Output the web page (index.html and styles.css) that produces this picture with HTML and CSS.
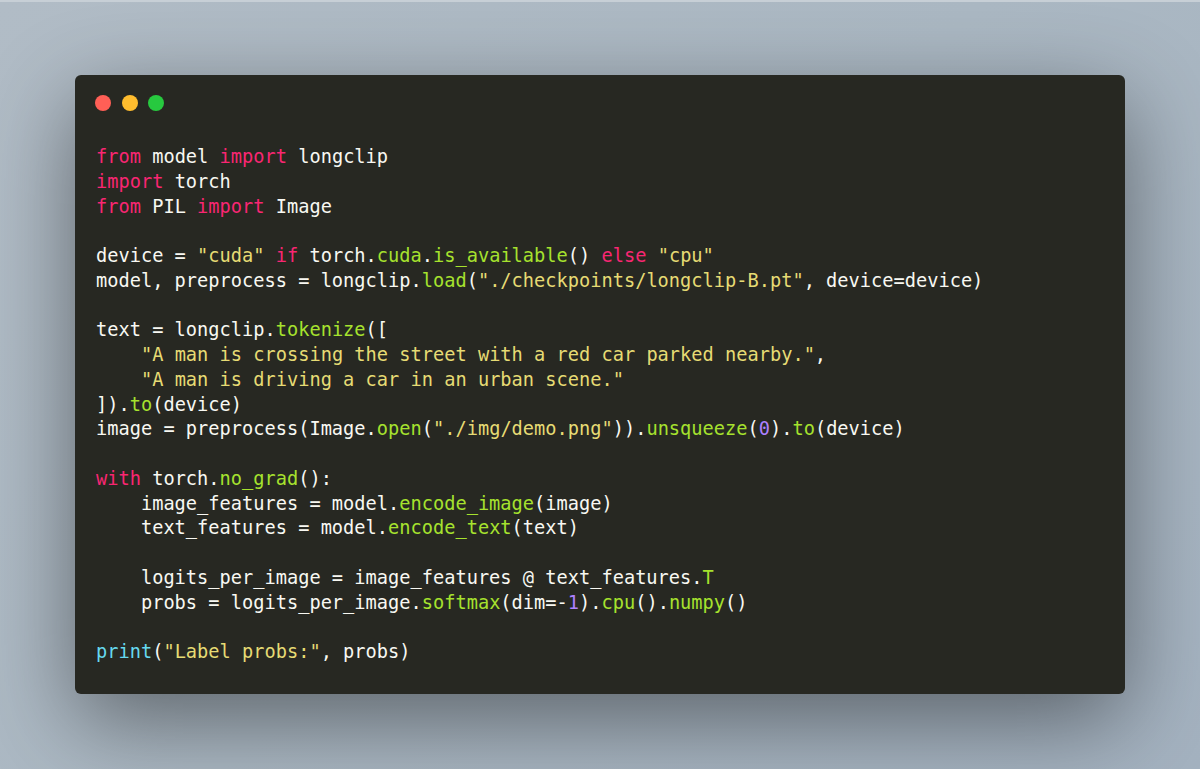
FILE: index.html
```html
<!DOCTYPE html>
<html>
<head>
<meta charset="utf-8">
<link rel="stylesheet" href="styles.css">
</head>
<body>
<div class="frame">
  <div class="window">
    <div class="controls">
      <span class="dot red"></span>
      <span class="dot yellow"></span>
      <span class="dot green"></span>
    </div>
<pre class="code"><span class="kw">from</span> model <span class="kw">import</span> longclip
<span class="kw">import</span> torch
<span class="kw">from</span> PIL <span class="kw">import</span> Image

device = <span class="str">"cuda"</span> <span class="kw">if</span> torch.<span class="fn">cuda</span>.<span class="fn">is_available</span>() <span class="kw">else</span> <span class="str">"cpu"</span>
model, preprocess = longclip.<span class="fn">load</span>(<span class="str">"./checkpoints/longclip-B.pt"</span>, device=device)

text = longclip.<span class="fn">tokenize</span>([
    <span class="str">"A man is crossing the street with a red car parked nearby."</span>,
    <span class="str">"A man is driving a car in an urban scene."</span>
]).<span class="fn">to</span>(device)
image = preprocess(Image.<span class="fn">open</span>(<span class="str">"./img/demo.png"</span>)).<span class="fn">unsqueeze</span>(<span class="num">0</span>).<span class="fn">to</span>(device)

<span class="kw">with</span> torch.<span class="fn">no_grad</span>():
    image_features = model.<span class="fn">encode_image</span>(image)
    text_features = model.<span class="fn">encode_text</span>(text)

    logits_per_image = image_features @ text_features.<span class="fn">T</span>
    probs = logits_per_image.<span class="fn">softmax</span>(dim=-<span class="num">1</span>).<span class="fn">cpu</span>().<span class="fn">numpy</span>()

<span class="bi">print</span>(<span class="str">"Label probs:"</span>, probs)</pre>
  </div>
</div>
</body>
</html>
```

FILE: styles.css
```css
html, body {
  margin: 0;
  padding: 0;
}

body {
  width: 1200px;
  height: 769px;
  overflow: hidden;
  background: linear-gradient(135deg, #b1bcc6 0%, #abb8c3 50%, #a4b2c0 100%);
}

.frame {
  box-sizing: border-box;
  width: 1200px;
  height: 769px;
  padding: 75px;
  border-top: 2px solid #c7cfd6;
}

.window {
  box-sizing: border-box;
  width: 1050px;
  height: 619px;
  margin-top: -2px;
  background: #272822;
  border-radius: 6px;
  box-shadow: 0 27px 90px rgba(0, 0, 0, 0.45);
  padding: 20px 20px 0 21px;
  display: flex;
  flex-direction: column;
}

.controls {
  display: flex;
  gap: 10.7px;
  height: 16px;
  margin-left: -1px;
}

.dot {
  width: 16px;
  height: 16px;
  border-radius: 50%;
  display: block;
}

.red { background: #ff5f56; }
.yellow { background: #ffbd2e; }
.green { background: #27c93f; }

.code {
  margin: 34px 0 0 0;
  font-family: "DejaVu Sans Mono", monospace;
  font-size: 18.67px;
  line-height: 24.75px;
  color: #f8f8f2;
  white-space: pre;
}

.kw { color: #f92672; }
.str { color: #e6db74; }
.fn { color: #a6e22e; }
.num { color: #ae81ff; }
.bi { color: #66d9ef; }
```
